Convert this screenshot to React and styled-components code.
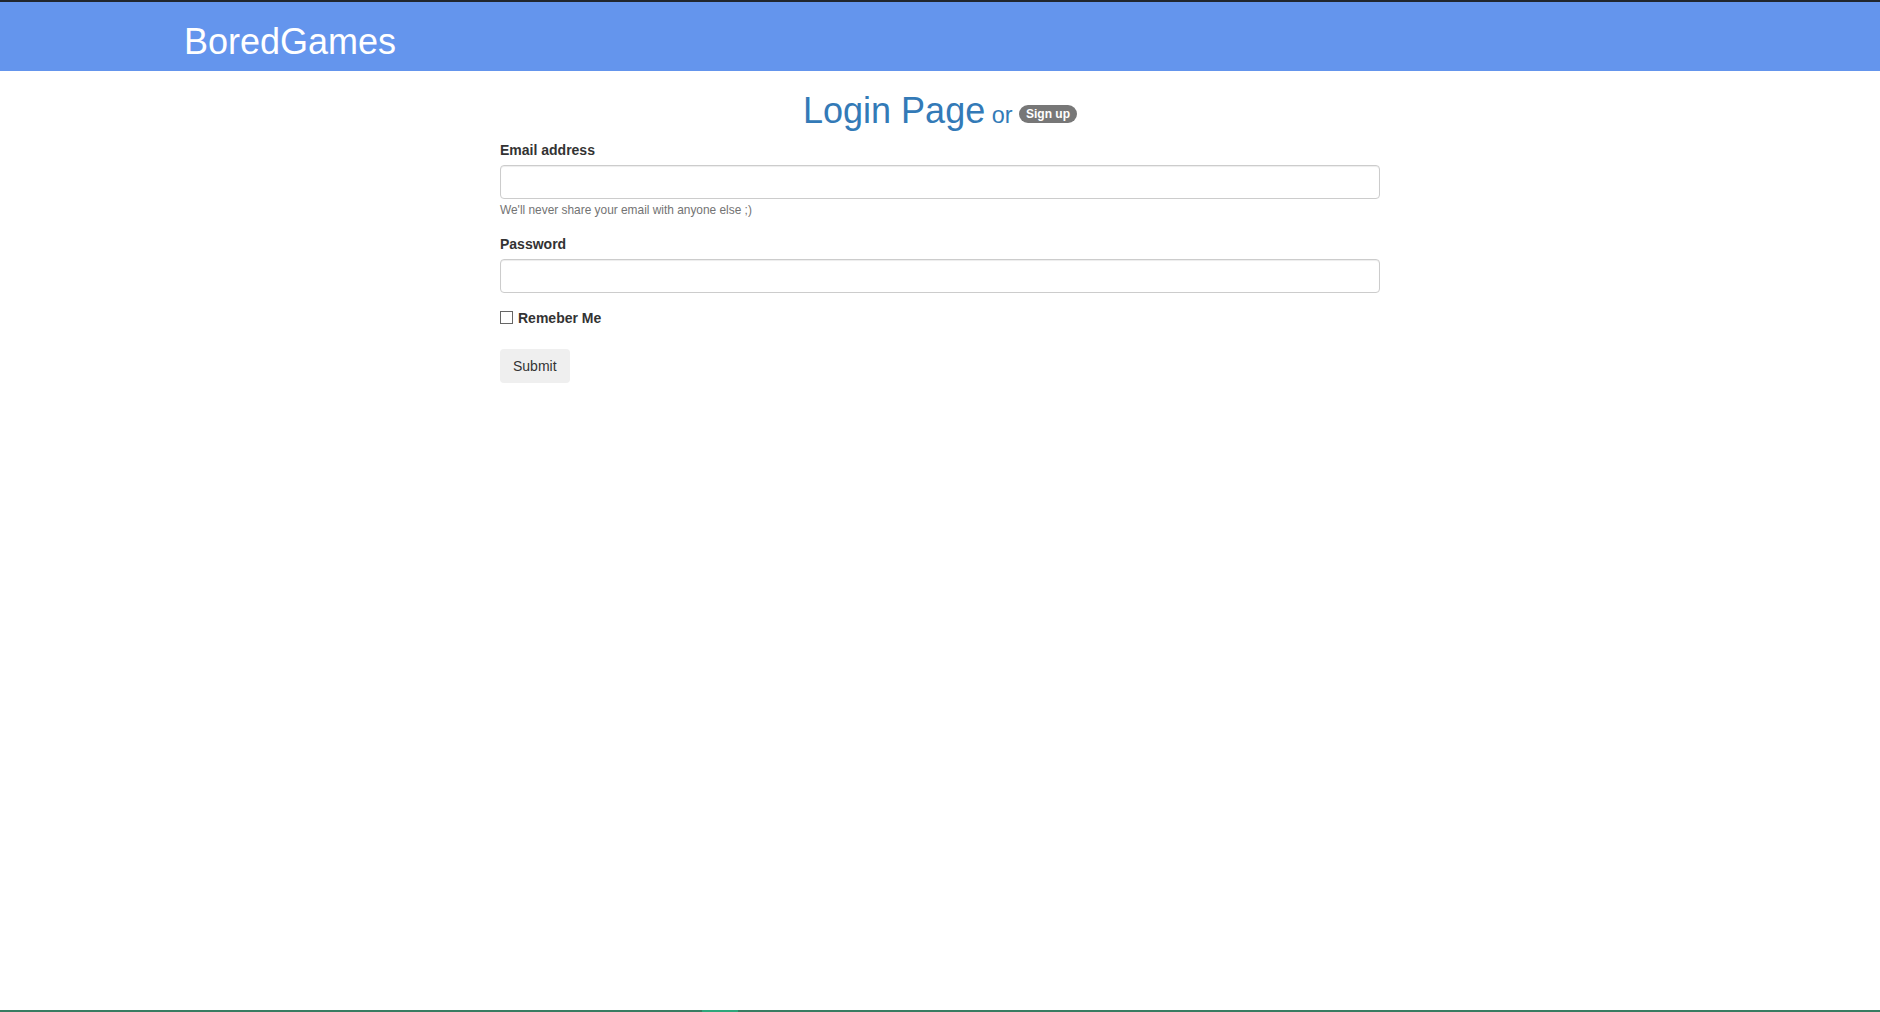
import styled, { createGlobalStyle } from "styled-components";

const GlobalStyle = createGlobalStyle`
    html, body {
        margin: 0;
        padding: 0;
    }
    body {
        font-family: "Liberation Sans", Arial, sans-serif;
        font-size: 14px;
        line-height: 1.42857143;
        color: #333;
        background: #fff;
    }
    * {
        box-sizing: border-box;
    }
`;

const Page = styled.div`
    display: flex;
    flex-direction: column;
    min-height: 100vh;
`;

const Header = styled.header`
    background-color: #6495ed;
    border-top: 2px solid #21262d;
    padding: 0 0 0 184px;
`;

const Brand = styled.h1`
    margin: 20px 0 9px;
    font-size: 36px;
    font-weight: 400;
    line-height: 1.1;
    color: #fff;
`;

const Main = styled.main`
    flex: 1;
`;

const Title = styled.h1`
    margin: 20px 0 10px;
    font-size: 36px;
    font-weight: 400;
    line-height: 1.1;
    text-align: center;
    color: #337ab7;

    small {
        font-size: 65%;
        font-weight: 400;
        line-height: 1;
    }
`;

const Badge = styled.a`
    display: inline-block;
    min-width: 10px;
    margin-top: 2px;
    padding: 3px 7px;
    font-size: 12px;
    font-weight: 700;
    line-height: 1;
    color: #fff;
    text-align: center;
    white-space: nowrap;
    vertical-align: middle;
    background-color: #777;
    border-radius: 10px;
    text-decoration: none;
    cursor: pointer;
`;

const Form = styled.form`
    width: 880px;
    margin: 0 auto;
`;

const Group = styled.div`
    margin-bottom: 15px;
`;

const Label = styled.label`
    display: inline-block;
    margin-bottom: 5px;
    font-weight: 700;
`;

const Input = styled.input`
    display: block;
    width: 100%;
    height: 34px;
    padding: 6px 12px;
    font-family: inherit;
    font-size: 14px;
    color: #555;
    background: #fff;
    border: 1px solid #ccc;
    border-radius: 4px;
    box-shadow: inset 0 1px 1px rgba(0, 0, 0, 0.075);
    outline: none;
`;

const Help = styled.small`
    display: block;
    margin-top: 3px;
    font-size: 85%;
    line-height: 17px;
    color: #737373;
`;

const CheckRow = styled.label`
    display: flex;
    align-items: center;
    gap: 5px;
    margin: 8px 0 21px;
    font-weight: 700;
    line-height: 20px;
`;

const Check = styled.input`
    appearance: none;
    width: 13px;
    height: 13px;
    margin: 0 0 1px 0;
    background: #fff;
    border: 1px solid #666;
    border-radius: 0;

    &:checked {
        background: #0075ff;
        border-color: #0075ff;
    }
`;

const Button = styled.button`
    display: inline-block;
    padding: 6px 12px;
    font-family: inherit;
    font-size: 14px;
    line-height: 1.42857143;
    color: #333;
    background-color: #efefef;
    border: 1px solid transparent;
    border-radius: 4px;
    cursor: pointer;
`;

const BottomStrip = styled.div`
    height: 2px;
    background: linear-gradient(
        to right,
        #387c62 0,
        #387c62 702px,
        #2ea67b 702px,
        #2ea67b 738px,
        #387c62 738px
    );
`;

export default function App() {
    return (
        <Page>
            <GlobalStyle />
            <Header>
                <Brand>BoredGames</Brand>
            </Header>
            <Main>
                <Title>
                    Login Page<small> or </small><Badge>Sign up</Badge>
                </Title>
                <Form onSubmit={(e) => e.preventDefault()}>
                    <Group>
                        <Label htmlFor="email">Email address</Label>
                        <Input id="email" type="email" />
                        <Help>We'll never share your email with anyone else ;)</Help>
                    </Group>
                    <Group>
                        <Label htmlFor="password">Password</Label>
                        <Input id="password" type="password" />
                    </Group>
                    <CheckRow>
                        <Check type="checkbox" />
                        Remeber Me
                    </CheckRow>
                    <Button type="submit">Submit</Button>
                </Form>
            </Main>
            <BottomStrip />
        </Page>
    );
}
